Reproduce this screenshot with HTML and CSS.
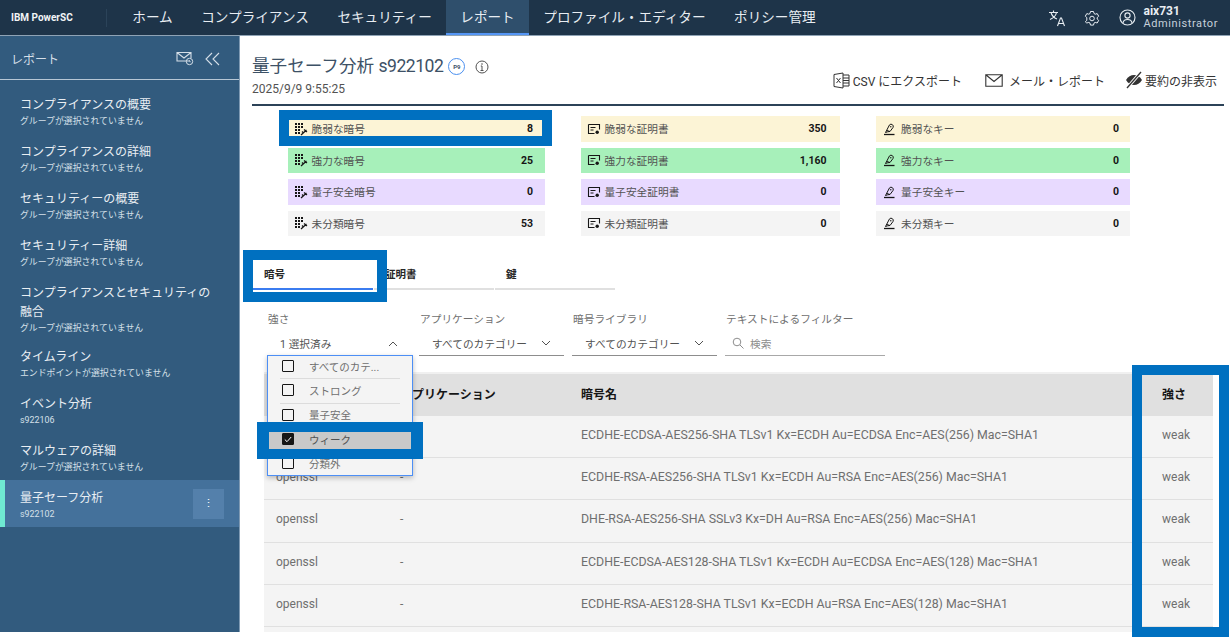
FILE: index.html
```html
<!DOCTYPE html>
<html lang="ja">
<head>
<meta charset="utf-8">
<title>量子セーフ分析</title>
<link rel="stylesheet" href="styles.css">
</head>
<body>
<svg class="defs" width="0" height="0" aria-hidden="true">
  <defs>
    <symbol id="i-cipher" viewBox="0 0 14 14">
      <g fill="currentColor">
        <rect x="1" y="1" width="2" height="2"/><rect x="4" y="1" width="2" height="2"/><rect x="7" y="1" width="2" height="2"/>
        <rect x="1" y="4" width="2" height="2"/><rect x="4" y="4" width="2" height="2"/><rect x="7" y="4" width="2" height="2"/>
        <rect x="1" y="7" width="2" height="2"/><rect x="4" y="7" width="2" height="2"/>
        <rect x="1" y="10" width="2" height="2"/><rect x="4" y="10" width="2" height="2"/>
      </g>
      <path d="M7 13L12.500 8M10 7.500L13 10M8 9.500l1.500 1.500" fill="none" stroke="currentColor" stroke-width="1.200"/>
    </symbol>
    <symbol id="i-cert" viewBox="0 0 14 14">
      <path d="M1.500 2.500h11v5M1.500 2.500v9h6M3.500 5.500h5M3.500 8h3" fill="none" stroke="currentColor" stroke-width="1.100"/>
      <circle cx="10.200" cy="10.200" r="1.700" fill="currentColor"/>
    </symbol>
    <symbol id="i-key" viewBox="0 0 14 14">
      <path d="M2 12.500h10.500" fill="none" stroke="currentColor" stroke-width="1.300"/>
      <path d="M3.500 10.500c1.500-.6 3-1 4.500-1l3-4a2.200 2.200 0 0 0-3.500-2.600zM5 8.500l3 1" fill="none" stroke="currentColor" stroke-width="1"/>
      <circle cx="8.800" cy="4.800" r=".7" fill="currentColor"/>
    </symbol>
    <symbol id="i-chev-down" viewBox="0 0 10 6">
      <path d="M1 1l4 4 4-4" fill="none" stroke="currentColor" stroke-width="1"/>
    </symbol>
    <symbol id="i-chev-up" viewBox="0 0 10 6">
      <path d="M1 5l4-4 4 4" fill="none" stroke="currentColor" stroke-width="1"/>
    </symbol>
  </defs>
</svg>

<header class="topbar">
  <div class="brand">IBM PowerSC</div>
  <nav class="topnav">
    <a class="nav-item">ホーム</a>
    <a class="nav-item">コンプライアンス</a>
    <a class="nav-item">セキュリティー</a>
    <a class="nav-item active">レポート</a>
    <a class="nav-item">プロファイル・エディター</a>
    <a class="nav-item">ポリシー管理</a>
  </nav>
  <div class="top-tools">
    <svg class="tool lang" width="18" height="18" viewBox="0 0 18 18"><path d="M1 3.500h9M5.500 1.500v2M8.500 3.500c-.6 3-3 5.500-6.500 7M3 3.500c.8 3 3.200 5.500 6 6.500" fill="none" stroke="currentColor" stroke-width="1.100"/><path d="M9.500 17l3-8h1l3 8M10.700 14.500h4.600" fill="none" stroke="currentColor" stroke-width="1.100"/></svg>
    <svg class="tool" width="16" height="16" viewBox="0 0 16 16"><path d="M6.500 1.500h3l.5 2 1.200.7 2-.6 1.500 2.600-1.500 1.400v1.400l1.500 1.400-1.500 2.600-2-.6-1.200.7-.5 2h-3l-.5-2-1.200-.7-2 .6L1.300 11.800l1.500-1.400V7.600L1.300 6.200l1.500-2.600 2 .6L6 3.500z" fill="none" stroke="currentColor" stroke-width="1"/><circle cx="8" cy="8.500" r="2.300" fill="none" stroke="currentColor" stroke-width="1"/></svg>
    <div class="user">
      <svg width="17" height="17" viewBox="0 0 17 17"><circle cx="8.500" cy="8.500" r="7.500" fill="none" stroke="currentColor" stroke-width="1.100"/><circle cx="8.500" cy="6.500" r="2.600" fill="none" stroke="currentColor" stroke-width="1.100"/><path d="M4 14c.3-2.500 1.800-3.500 4.500-3.500S12.700 11.500 13 14" fill="none" stroke="currentColor" stroke-width="1.100"/></svg>
      <div class="user-text"><strong>aix731</strong><span>Administrator</span></div>
    </div>
  </div>
</header>

<div class="app">
  <aside class="sidebar">
    <div class="side-head">
      <span>レポート</span>
      <div class="side-icons">
        <svg width="18" height="15" viewBox="0 0 18 15"><path d="M13 10H1V1.500h14V7M1 1.500l7 5.500 7-5.500" fill="none" stroke="currentColor" stroke-width="1.100"/><circle cx="13.500" cy="10.500" r="3.200" fill="none" stroke="currentColor" stroke-width="1"/><path d="M13.500 9v1.700h1.300" fill="none" stroke="currentColor" stroke-width=".8"/></svg>
        <svg width="15" height="14" viewBox="0 0 15 14"><path d="M7 1L1 7l6 6M14 1L8 7l6 6" fill="none" stroke="currentColor" stroke-width="1.100"/></svg>
      </div>
    </div>
    <ul class="side-list">
      <li class="side-item"><b>コンプライアンスの概要</b><small>グループが選択されていません</small></li>
      <li class="side-item"><b>コンプライアンスの詳細</b><small>グループが選択されていません</small></li>
      <li class="side-item"><b>セキュリティーの概要</b><small>グループが選択されていません</small></li>
      <li class="side-item"><b>セキュリティー詳細</b><small>グループが選択されていません</small></li>
      <li class="side-item tall"><b>コンプライアンスとセキュリティの融合</b><small>グループが選択されていません</small></li>
      <li class="side-item"><b>タイムライン</b><small>エンドポイントが選択されていません</small></li>
      <li class="side-item"><b>イベント分析</b><small>s922106</small></li>
      <li class="side-item"><b>マルウェアの詳細</b><small>グループが選択されていません</small></li>
      <li class="side-item current"><b>量子セーフ分析</b><small>s922102</small><span class="kebab">⋮</span></li>
    </ul>
  </aside>

  <main class="content">
    <section class="page-head">
      <div>
        <h1 class="page-title"><span>量子セーフ分析&nbsp;<span class="host">s922102</span></span><span class="p9">P9</span><svg class="info" width="14" height="14" viewBox="0 0 14 14"><circle cx="7" cy="7" r="6" fill="none" stroke="currentColor"/><path d="M5.500 10.500h3M7 10.500V6H5.800" fill="none" stroke="currentColor"/><circle cx="7" cy="4" r=".8" fill="currentColor"/></svg></h1>
        <div class="page-date">2025/9/9 9:55:25</div>
      </div>
      <div class="actions">
        <span class="action">
          <svg width="17" height="17" viewBox="0 0 17 17"><path d="M1 2.500L10 1v15l-9-1.500zM10 3h6v11h-6M10 6h6M10 8.500h6M10 11h6" fill="none" stroke="currentColor"/><path d="M3.500 6l4 5M7.500 6l-4 5" fill="none" stroke="currentColor"/></svg>
          <span>CSV にエクスポート</span>
        </span>
        <span class="action mail">
          <svg width="18" height="13" viewBox="0 0 18 13"><path d="M.8.800h16.400v11.400H.8zM.8.800L9 7.500 17.200.8" fill="none" stroke="currentColor" stroke-width="1.100"/></svg>
          <span>メール・レポート</span>
        </span>
        <span class="action hide">
          <svg width="18" height="18" viewBox="0 0 18 18"><path d="M1 9c2-3.500 4.800-5 8-5s6 1.500 8 5c-2 3.500-4.800 5-8 5S3 12.500 1 9z" fill="currentColor"/><path d="M2 17L16 1" stroke="#fff" stroke-width="3.200"/><path d="M2 17L16 1" stroke="currentColor" stroke-width="1.300"/></svg>
          <span>要約の非表示</span>
        </span>
      </div>
    </section>

    <section class="stats">
      <div class="stat weak"><svg class="si"><use href="#i-cipher"/></svg><span>脆弱な暗号</span><b>8</b></div>
      <div class="stat weak"><svg class="si"><use href="#i-cert"/></svg><span>脆弱な証明書</span><b>350</b></div>
      <div class="stat weak"><svg class="si"><use href="#i-key"/></svg><span>脆弱なキー</span><b>0</b></div>
      <div class="stat strong"><svg class="si"><use href="#i-cipher"/></svg><span>強力な暗号</span><b>25</b></div>
      <div class="stat strong"><svg class="si"><use href="#i-cert"/></svg><span>強力な証明書</span><b>1,160</b></div>
      <div class="stat strong"><svg class="si"><use href="#i-key"/></svg><span>強力なキー</span><b>0</b></div>
      <div class="stat safe"><svg class="si"><use href="#i-cipher"/></svg><span>量子安全暗号</span><b>0</b></div>
      <div class="stat safe"><svg class="si"><use href="#i-cert"/></svg><span>量子安全証明書</span><b>0</b></div>
      <div class="stat safe"><svg class="si"><use href="#i-key"/></svg><span>量子安全キー</span><b>0</b></div>
      <div class="stat none"><svg class="si"><use href="#i-cipher"/></svg><span>未分類暗号</span><b>53</b></div>
      <div class="stat none"><svg class="si"><use href="#i-cert"/></svg><span>未分類証明書</span><b>0</b></div>
      <div class="stat none"><svg class="si"><use href="#i-key"/></svg><span>未分類キー</span><b>0</b></div>
    </section>

    <div class="tabs">
      <div class="tab on">暗号</div>
      <div class="tab">証明書</div>
      <div class="tab">鍵</div>
    </div>

    <div class="filters">
      <div class="filter first">
        <label>強さ</label>
        <div class="select plain"><span>1 選択済み</span><svg class="chev"><use href="#i-chev-up"/></svg></div>
        <div class="menu">
          <div class="opt line"><i class="box"></i>すべてのカテ...</div>
          <div class="opt line"><i class="box"></i>ストロング</div>
          <div class="opt"><i class="box"></i>量子安全</div>
          <div class="opt sel"><i class="box checked"><svg width="8" height="7" viewBox="0 0 8 7"><path d="M.8 3.500L3 5.700 7.200 1" fill="none" stroke="#fff" stroke-width="1"/></svg></i>ウィーク</div>
          <div class="opt"><i class="box"></i>分類外</div>
        </div>
      </div>
      <div class="filter">
        <label>アプリケーション</label>
        <div class="select"><span>すべてのカテゴリー</span><svg class="chev"><use href="#i-chev-down"/></svg></div>
      </div>
      <div class="filter">
        <label>暗号ライブラリ</label>
        <div class="select"><span>すべてのカテゴリー</span><svg class="chev"><use href="#i-chev-down"/></svg></div>
      </div>
      <div class="filter search">
        <label>テキストによるフィルター</label>
        <div class="select find">
          <svg width="12" height="12" viewBox="0 0 12 12"><circle cx="5" cy="5" r="3.800" fill="none" stroke="currentColor"/><path d="M8 8l3.500 3.500" stroke="currentColor"/></svg>
          <span>検索</span>
        </div>
      </div>
    </div>

    <div class="table">
      <div class="row th"><div>ライブラリ</div><div>アプリケーション</div><div>暗号名</div><div>強さ</div></div>
      <div class="row"><div>openssl</div><div>-</div><div class="cipher">ECDHE-ECDSA-AES256-SHA TLSv1 Kx=ECDH Au=ECDSA Enc=AES(256) Mac=SHA1</div><div>weak</div></div>
      <div class="row"><div>openssl</div><div>-</div><div class="cipher">ECDHE-RSA-AES256-SHA TLSv1 Kx=ECDH Au=RSA Enc=AES(256) Mac=SHA1</div><div>weak</div></div>
      <div class="row"><div>openssl</div><div>-</div><div class="cipher">DHE-RSA-AES256-SHA SSLv3 Kx=DH Au=RSA Enc=AES(256) Mac=SHA1</div><div>weak</div></div>
      <div class="row"><div>openssl</div><div>-</div><div class="cipher">ECDHE-ECDSA-AES128-SHA TLSv1 Kx=ECDH Au=ECDSA Enc=AES(128) Mac=SHA1</div><div>weak</div></div>
      <div class="row"><div>openssl</div><div>-</div><div class="cipher">ECDHE-RSA-AES128-SHA TLSv1 Kx=ECDH Au=RSA Enc=AES(128) Mac=SHA1</div><div>weak</div></div>
      <div class="row"></div>
    </div>
  </main>

  <div class="mark mark-stat"></div>
  <div class="mark mark-tab"></div>
  <div class="mark mark-opt"></div>
  <div class="mark mark-col"></div>
</div>
</body>
</html>
```

FILE: styles.css
```css
* { box-sizing: border-box; }
html, body { margin: 0; height: 100%; }
body {
  background: #fff;
  font-family: Roboto, "Noto Sans CJK JP", sans-serif;
  color: #161616;
  overflow: hidden;
}
.defs { position: absolute; }

/* top bar */
.topbar {
  height: 36px;
  background: #1e3449;
  border-bottom: 1px solid #8fa3b5;
  color: #e8edf2;
  display: flex;
  align-items: stretch;
}
.brand {
  width: 107px;
  margin: 9px 11px 8px 0;
  padding-left: 11px;
  border-right: 1px solid #2b4359;
  font-size: 10px;
  font-weight: 700;
  line-height: 18px;
  color: #f2f4f6;
}
.topnav { display: flex; }
.nav-item {
  padding: 0 14.3px;
  font-size: 13.6px;
  line-height: 35px;
  white-space: nowrap;
}
.nav-item.active {
  background: #2f4f6c;
  box-shadow: inset 0 -2px 0 #5596f5;
}
.top-tools {
  margin-left: auto;
  display: flex;
  align-items: center;
  padding-right: 12px;
  gap: 19px;
}
.tool { display: block; }
.tool.lang { margin-right: -1px; }
.user { display: flex; align-items: center; gap: 7px; }
.user-text { display: flex; flex-direction: column; line-height: 12.5px; }
.user-text strong { font-size: 12px; font-weight: 700; }
.user-text span { font-size: 11px; letter-spacing: .6px; color: #c6d0da; }

/* shell */
.app { position: relative; display: flex; height: 596px; }

/* sidebar */
.sidebar {
  width: 240px;
  flex: none;
  background: #325b7e;
  border-right: 1px solid #7f9ab3;
  color: #e6ecf2;
}
.side-head {
  height: 44px;
  border-bottom: 1px solid #b7c7d5;
  padding: 2px 19px 0 11px;
  display: flex;
  align-items: center;
  justify-content: space-between;
  font-size: 12px;
  color: #d5dfe8;
}
.side-icons { display: flex; align-items: center; gap: 11px; }
.side-icons svg { display: block; }
.side-list { list-style: none; margin: 0; padding: 14px 0 0; }
.side-item {
  position: relative;
  padding: 2px 20px 0;
  margin-bottom: 13px;
  height: 34px;
}
.side-item.tall { height: 51px; }
.side-item b {
  display: block;
  font-weight: 400;
  font-size: 12px;
  line-height: 19px;
  color: #e9eef3;
}
.side-item small {
  display: block;
  font-size: 8.9px;
  line-height: 12px;
  color: #d6e0e9;
}
.side-item.current {
  background: #44719b;
  box-shadow: inset 5px 0 0 #6fe9d2;
  height: 47px;
  margin: -7px 0 0;
  padding-top: 9px;
}
.kebab {
  position: absolute;
  right: 15px;
  top: 9px;
  width: 31px;
  height: 30px;
  background: #5480ab;
  text-align: center;
  line-height: 30px;
  font-size: 11px;
  color: #fff;
}

/* content */
.content { flex: 1; min-width: 0; padding-left: 12px; overflow: hidden; }
.page-head {
  margin-right: 6px;
  height: 70px;
  border-bottom: 2px solid #2c4358;
  display: flex;
  justify-content: space-between;
}
.page-title {
  margin: 18px 0 0;
  height: 25px;
  display: flex;
  align-items: center;
  font-size: 17.6px;
  line-height: 25px;
  font-weight: 400;
  color: #3d5166;
  white-space: nowrap;
}
.host { letter-spacing: -.5px; }
.p9 {
  width: 17px;
  height: 17px;
  margin-left: 5px;
  border: 1px solid #4a90f0;
  border-radius: 50%;
  font-size: 6px;
  font-weight: 700;
  line-height: 15px;
  text-align: center;
  color: #3d5166;
}
.info { margin-left: 10px; color: #525252; }
.page-date { margin-top: 2px; font-size: 12px; line-height: 16px; color: #525252; }
.actions { display: flex; align-items: center; padding: 20px 7px 0 0; height: 68px; }
.action { display: flex; align-items: center; gap: 3px; font-size: 12px; color: #333; white-space: nowrap; }
.action.mail { gap: 6px; margin-left: 23px; }
.action.hide { gap: 2px; margin-left: 20px; }

/* stats */
.stats {
  margin: 10px 0 0 36px;
  display: grid;
  grid-template-columns: 257px 258.5px 254.5px;
  grid-auto-rows: 25.5px;
  column-gap: 36px;
  row-gap: 6px;
}
.stat {
  display: flex;
  align-items: center;
  padding: 0 12px 0 6px;
  font-size: 10.7px;
  color: #525252;
}
.stat span { flex: 1; margin-left: 3.5px; }
.stat:nth-child(3n + 2) { padding-right: 13px; }
.stat:nth-child(3n) { padding-right: 11px; }
.stat:nth-child(3n) span { margin-left: 5.5px; }
.stat b { font-size: 10.5px; color: #161616; font-weight: 700; }
.si { width: 14px; height: 14px; color: #161616; flex: none; }
.weak { background: #fcf4d6; }
.strong { background: #a7f0ba; }
.safe { background: #e8daff; }
.none { background: #f4f4f4; }

/* tabs */
.tabs { display: flex; margin: 24px 0 0 1px; gap: 1px; }
.tab {
  width: 120px;
  height: 30px;
  padding-left: 11px;
  font-size: 10.5px;
  font-weight: 700;
  line-height: 30px;
  border-bottom: 2px solid #e0e0e0;
  color: #262626;
}
.tab.on { border-bottom-color: #3b7cf0; }

/* filters */
.filters { display: flex; gap: 8px; margin: 20px 0 0 15px; }
.filter { position: relative; width: 145px; }
.filter.first { width: 144px; }
.filter.search { width: 160px; }
.filter label {
  display: block;
  height: 19px;
  padding-left: 1px;
  font-size: 10.7px;
  line-height: 19px;
  color: #6f6f6f;
}
.select {
  height: 27px;
  border-bottom: 1px solid #8d8d8d;
  padding: 2px 13px 0;
  display: flex;
  align-items: center;
  justify-content: space-between;
  font-size: 10.7px;
  color: #525252;
}
.select.plain { border-bottom: 0; }
.chev { width: 10px; height: 6px; color: #525252; }
.select.find { justify-content: flex-start; gap: 6px; padding-left: 7px; color: #8d8d8d; border-bottom-color: #a8a8a8; }
.menu {
  position: absolute;
  top: 45px;
  left: 0;
  width: 146px;
  height: 121px;
  z-index: 2;
  background: #f4f4f4;
  border: 1px solid #4d8ff5;
  box-shadow: 0 2px 5px rgba(0,0,0,.25);
  overflow: hidden;
}
.opt {
  position: relative;
  height: 24.3px;
  padding-left: 14px;
  display: flex;
  align-items: center;
  gap: 15px;
  font-size: 10.5px;
  color: #6f6f6f;
}
.opt:first-child { margin-top: -2px; }
.opt.line::after {
  content: "";
  position: absolute;
  left: 12px;
  right: 12px;
  bottom: -1px;
  height: 1px;
  background: #dcdcdc;
}
.opt.sel { background: #c9c9c9; color: #525252; }
.box {
  width: 12px;
  height: 12px;
  border: 1px solid #161616;
  border-radius: 1px;
  background: #f4f4f4;
  flex: none;
  display: flex;
  align-items: center;
  justify-content: center;
}
.box.checked { background: #161616; }

/* table */
.table { margin: 16px 0 0 12px; width: 949px; border-top: 2px solid #f0f0f0; }
.row {
  display: grid;
  grid-template-columns: 124px 181px 581px 63px;
  height: 42.2px;
  background: #f4f4f4;
  border-bottom: 1px solid #e0e0e0;
  font-size: 12px;
  color: #6f6f6f;
}
.row > div { padding: 0 0 3px 12px; display: flex; align-items: center; white-space: nowrap; }
.row > .cipher { font-size: 12.35px; }
.th { background: #e0e0e0; border-bottom: 0; font-size: 12px; font-weight: 700; color: #161616; height: 42px; }

/* blue annotations */
.mark { position: absolute; z-index: 3; border: 10px solid #0070c0; pointer-events: none; }
.mark-stat { left: 279px; top: 74px; width: 273px; height: 36px; }
.mark-tab { left: 243px; top: 214px; width: 144px; height: 52px; }
.mark-opt { left: 257px; top: 386px; width: 166px; height: 37px; border-width: 10px 12px; }
.mark-col { left: 1132px; top: 329px; width: 97px; height: 272px; }
```
